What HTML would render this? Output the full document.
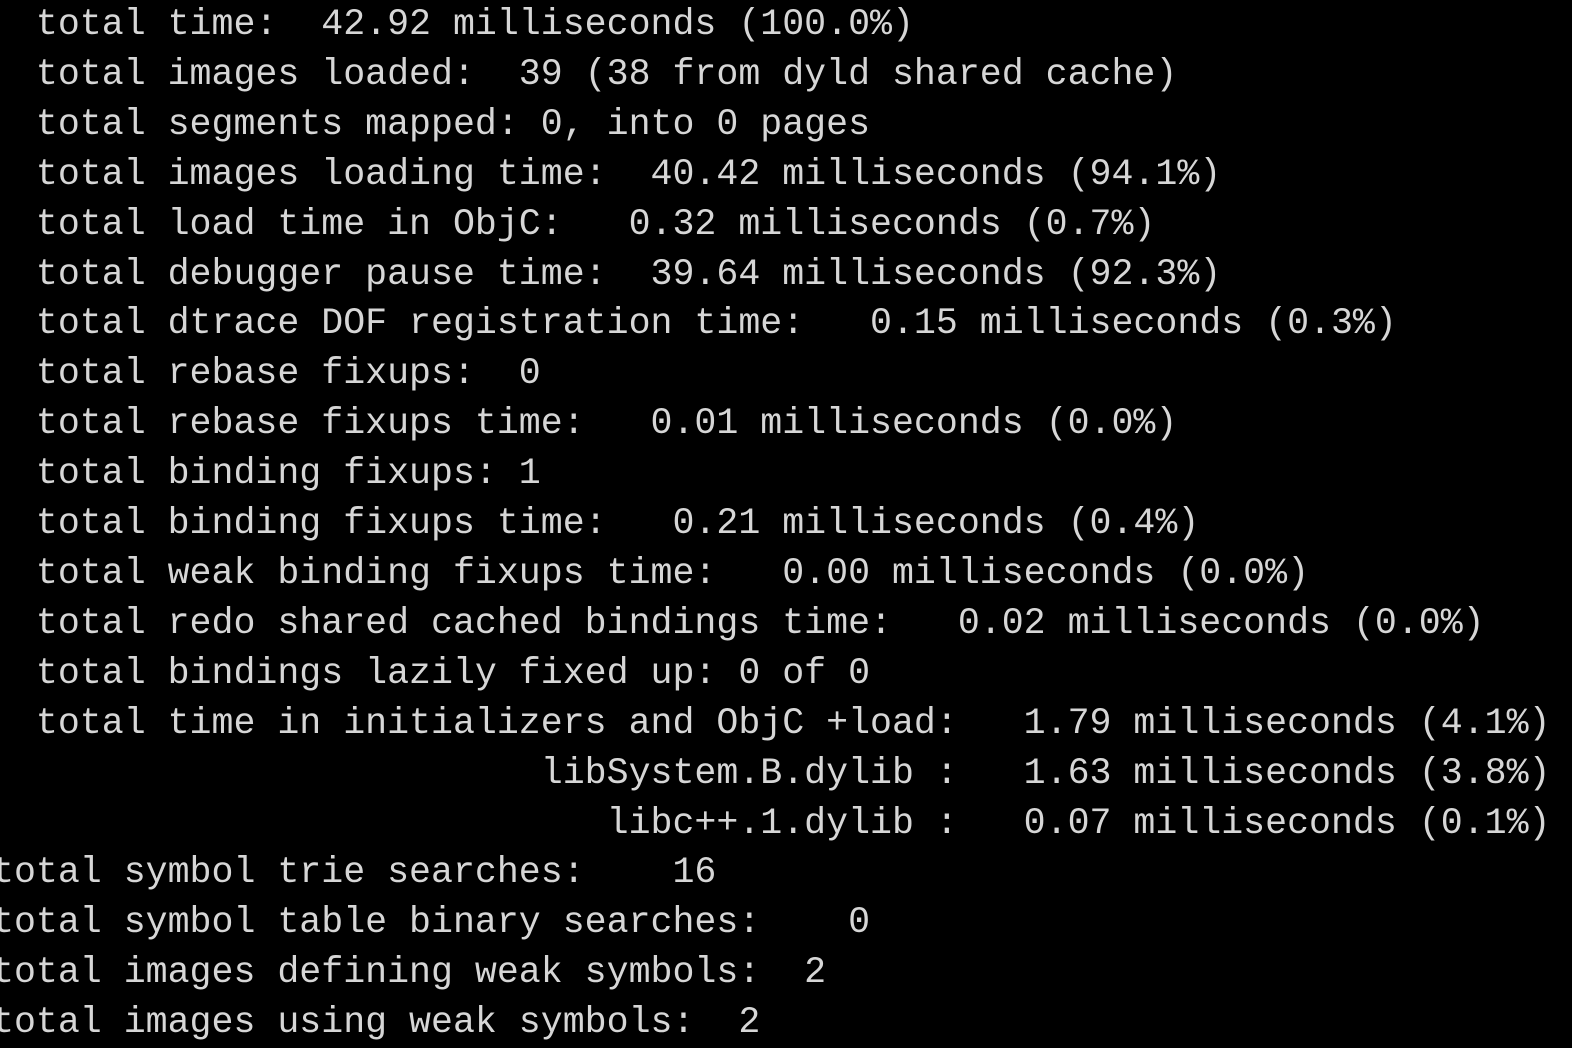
<!DOCTYPE html>
<html><head><meta charset="utf-8"><style>
html,body{margin:0;padding:0;background:#000;width:1572px;height:1030px;overflow:hidden}
pre{position:absolute;left:-8px;top:0px;margin:0;font-family:"Liberation Mono",monospace;font-size:36.6px;line-height:49.9px;color:#d6d6d6;white-space:pre}
</style></head><body><pre>  total time:  42.92 milliseconds (100.0%)
  total images loaded:  39 (38 from dyld shared cache)
  total segments mapped: 0, into 0 pages
  total images loading time:  40.42 milliseconds (94.1%)
  total load time in ObjC:   0.32 milliseconds (0.7%)
  total debugger pause time:  39.64 milliseconds (92.3%)
  total dtrace DOF registration time:   0.15 milliseconds (0.3%)
  total rebase fixups:  0
  total rebase fixups time:   0.01 milliseconds (0.0%)
  total binding fixups: 1
  total binding fixups time:   0.21 milliseconds (0.4%)
  total weak binding fixups time:   0.00 milliseconds (0.0%)
  total redo shared cached bindings time:   0.02 milliseconds (0.0%)
  total bindings lazily fixed up: 0 of 0
  total time in initializers and ObjC +load:   1.79 milliseconds (4.1%)
                         libSystem.B.dylib :   1.63 milliseconds (3.8%)
                            libc++.1.dylib :   0.07 milliseconds (0.1%)
total symbol trie searches:    16
total symbol table binary searches:    0
total images defining weak symbols:  2
total images using weak symbols:  2</pre></body></html>
